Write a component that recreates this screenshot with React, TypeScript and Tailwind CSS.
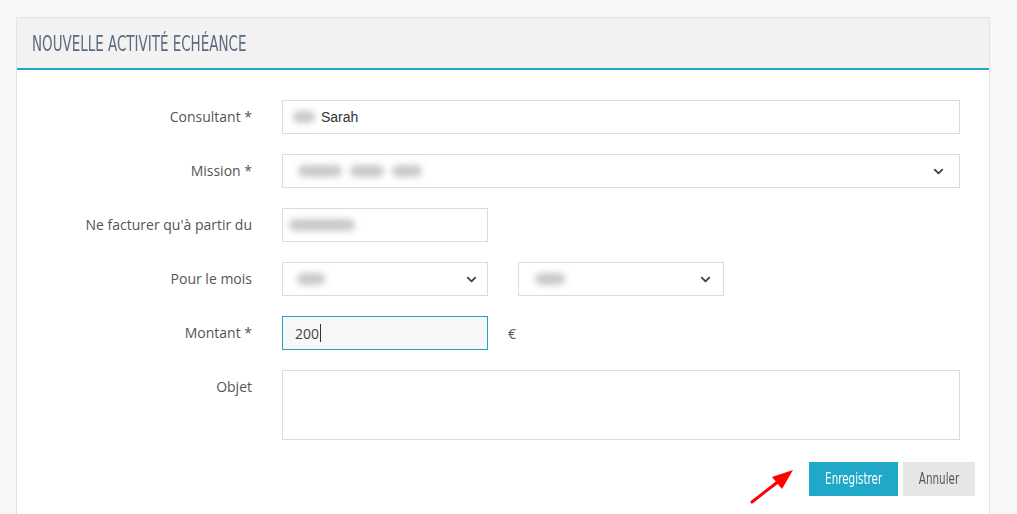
import { ChevronDown } from "lucide-react";

const labelCls = "w-[235px] shrink-0 text-right text-[14px] text-[#555] pt-[6px]";
const boxCls = "h-[34px] border border-[#dcdcdc] bg-white flex items-center";

function Blur({ w, className = "" }: { w: number; className?: string }) {
  return <span className={`inline-block h-[12px] rounded-full bg-[#c9c9c9] blur-[3px] ${className}`} style={{ width: w }} />;
}

function Row({ label, children }: { label: string; children: React.ReactNode }) {
  return (
    <div className="flex items-start">
      <div className={labelCls}>{label}</div>
      <div className="ml-[30px] flex-1">{children}</div>
    </div>
  );
}

export default function App() {
  return (
    <div className="min-h-[514px] bg-[#f7f7f7] pt-[17px] pl-[16px] pr-[27px] font-['Open_Sans',sans-serif]">
      <div className="bg-white border-t border-l border-r border-[#e3e3e3] min-h-[497px]">
        <div className="h-[52px] bg-[#f2f2f2] border-b-2 border-[#1fa5c6] flex items-center pl-[15px]">
          <h1 className="text-[22px] text-[#5b6b80] font-['DejaVu_Sans_Condensed',sans-serif] font-light whitespace-nowrap scale-x-[0.68] origin-left">
            NOUVELLE ACTIVITÉ ECHÉANCE
          </h1>
        </div>

        <div className="pt-[30px] pr-[29px] flex flex-col gap-[20px]">
          <Row label="Consultant *">
            <div className={`${boxCls} px-[10px]`}>
              <Blur w={22} className="mr-[6px]" />
              <span className="text-[14px] text-[#333] font-['Liberation_Sans',sans-serif]">Sarah</span>
            </div>
          </Row>

          <Row label="Mission *">
            <div className={`${boxCls} px-[15px] justify-between`}>
              <div className="flex items-center gap-[8px]">
                <Blur w={44} />
                <Blur w={34} />
                <Blur w={30} />
              </div>
              <ChevronDown size={15} strokeWidth={3} className="text-[#444] mr-[-2px]" />
            </div>
          </Row>

          <Row label="Ne facturer qu'à partir du">
            <div className={`${boxCls} w-[206px] px-[6px]`}>
              <Blur w={66} />
            </div>
          </Row>

          <Row label="Pour le mois">
            <div className="flex gap-[30px]">
              <div className={`${boxCls} w-[206px] px-[14px] justify-between`}>
                <Blur w={28} />
                <ChevronDown size={15} strokeWidth={3} className="text-[#444] mr-[-6px]" />
              </div>
              <div className={`${boxCls} w-[206px] px-[16px] justify-between`}>
                <Blur w={30} />
                <ChevronDown size={15} strokeWidth={3} className="text-[#444] mr-[-6px]" />
              </div>
            </div>
          </Row>

          <Row label="Montant *">
            <div className="flex items-center">
              <div className="h-[34px] w-[206px] border border-[#1fa5c6] bg-[#f7f7f7] flex items-center px-[12px]">
                <span className="text-[14px] text-[#444]">200</span>
                <span className="w-px h-[18px] bg-[#333] ml-[1px]" />
              </div>
              <span className="ml-[20px] text-[14px] text-[#555]">€</span>
            </div>
          </Row>

          <Row label="Objet">
            <div className="h-[70px] border border-[#dcdcdc] bg-white" />
          </Row>
        </div>

        <div className="flex justify-end items-center pr-[14px] pt-[13px] gap-[5px]">
          <svg width="46" height="38" viewBox="0 0 46 38" className="mr-[9px] mt-[14px]">
            <line x1="3" y1="35" x2="30" y2="14" stroke="#f00" strokeWidth="3" strokeLinecap="round" />
            <polygon points="44,3 23,10 33,22" fill="#f00" />
          </svg>
          <button className="h-[34px] w-[89px] bg-[#1fa8c7] text-white text-[16px] font-['DejaVu_Sans_Condensed',sans-serif] font-light whitespace-nowrap">
            <span className="inline-block scale-x-[0.72]">Enregistrer</span>
          </button>
          <button className="h-[34px] w-[72px] bg-[#e6e6e6] text-[#555] text-[16px] font-['DejaVu_Sans_Condensed',sans-serif] font-light whitespace-nowrap">
            <span className="inline-block scale-x-[0.72]">Annuler</span>
          </button>
        </div>
      </div>
    </div>
  );
}
